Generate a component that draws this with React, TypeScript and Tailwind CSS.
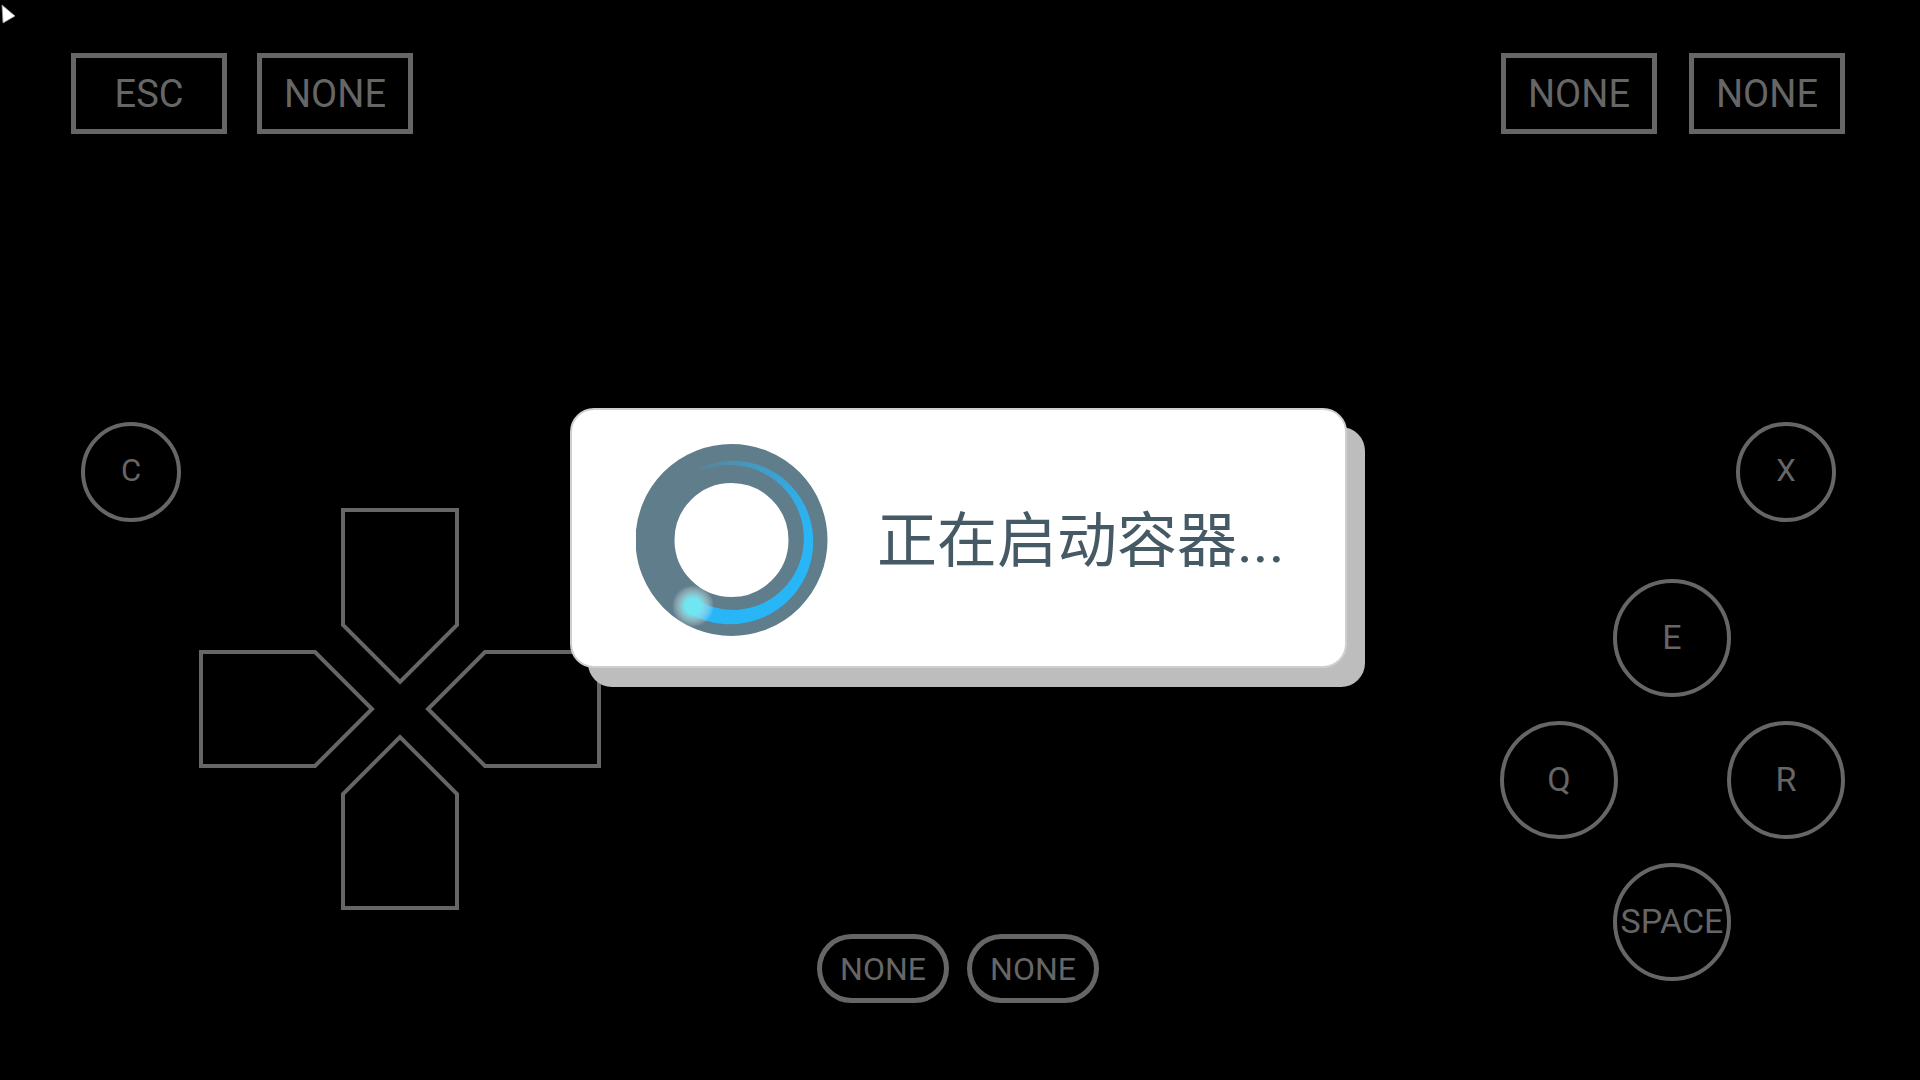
function Ring() {
  // Tapered blue sweep, from the faint tail at the top round to the bright head at the lower left.
  const cx = 95.5;
  const cy = 96;
  const r = 77;
  const start = -24;
  const end = 210;
  const n = 120;
  const segs = Array.from({ length: n }, (_, i) => {
    const t = i / n;
    const a0 = ((start + (end - start) * t - 0.3) * Math.PI) / 180;
    const a1 = ((start + (end - start) * (t + 1 / n) + 0.3) * Math.PI) / 180;
    // angle measured clockwise from the top
    const x0 = cx + r * Math.sin(a0);
    const y0 = cy - r * Math.cos(a0);
    const x1 = cx + r * Math.sin(a1);
    const y1 = cy - r * Math.cos(a1);
    const width = 3 + 13 * t;
    const op = Math.min(1, 0.1 + t * 2);
    return { d: `M${x0} ${y0}A${r} ${r} 0 0 1 ${x1} ${y1}`, width, op, key: i };
  });
  return (
    <svg width="192" height="192" viewBox="0 0 192 192" className="mt-[4px] shrink-0">
      <defs>
        <radialGradient id="glow">
          <stop offset="0" stopColor="#6fe6f0" />
          <stop offset="0.38" stopColor="#6fe6f0" />
          <stop offset="0.65" stopColor="#a6dfe6" stopOpacity="0.6" />
          <stop offset="1" stopColor="#e8f2f4" stopOpacity="0" />
        </radialGradient>
      </defs>
      <circle cx="95.5" cy="96" r="76.5" fill="none" stroke="#607d8b" strokeWidth="39" />
      {segs.map((s) => (
        <path key={s.key} d={s.d} fill="none" stroke="#29b6f6" strokeWidth={s.width} strokeOpacity={s.op} />
      ))}
      <circle cx="57" cy="162" r="21" fill="url(#glow)" />
    </svg>
  );
}

function DPad() {
  const pts = [
    "144,2 258,2 258,117 201,174 144,117",
    "144,400 258,400 258,286 201,229 144,286",
    "2,144 116,144 173,201 116,258 2,258",
    "400,144 286,144 229,201 286,258 400,258",
  ];
  return (
    <svg className="mt-[86px] ml-[18px] shrink-0" width="402" height="402" viewBox="0 0 402 402">
      {pts.map((p) => (
        <polygon key={p} points={p} fill="none" stroke="#666666" strokeWidth="4" />
      ))}
    </svg>
  );
}

function KeyRect({ label }: { label: string }) {
  return (
    <div className="flex h-[81px] w-[156px] items-center justify-center border-[5px] border-[#666666] pt-[2px] text-[38px] text-[#666666]">
      {label}
    </div>
  );
}

function KeyPill({ label }: { label: string }) {
  return (
    <div className="flex h-[69px] w-[132px] items-center justify-center rounded-full border-[5px] border-[#666666] text-[32px] text-[#666666]">
      {label}
    </div>
  );
}

function KeySmall({ label }: { label: string }) {
  return (
    <div className="flex size-[100px] shrink-0 items-center justify-center rounded-full border-4 border-[#666666] pb-[2px] text-[31px] text-[#666666]">
      {label}
    </div>
  );
}

function KeyBig({ label }: { label: string }) {
  return (
    <div className="flex size-[118px] shrink-0 items-center justify-center rounded-full border-4 border-[#666666] pb-px text-[34px] text-[#666666]">
      {label}
    </div>
  );
}

export default function App() {
  return (
    <div className="relative h-[1080px] w-[1920px] overflow-hidden bg-black pl-[71px] pr-[75px] pt-[53px] font-['Roboto','Liberation_Sans',sans-serif]">
      <svg className="absolute left-0 top-0" width="18" height="26" viewBox="0 0 18 26">
        <polygon points="2,5 15,16 3,23" fill="#ffffff" stroke="#9a9a9a" strokeWidth="0.8" />
      </svg>

      <div className="flex justify-between">
        <div className="flex gap-[30px]">
          <KeyRect label="ESC" />
          <KeyRect label="NONE" />
        </div>
        <div className="flex gap-[32px]">
          <KeyRect label="NONE" />
          <KeyRect label="NONE" />
        </div>
      </div>

      <div className="mt-[288px] flex items-start">
        <div className="ml-[10px] flex items-start">
          <KeySmall label="C" />
          <DPad />
        </div>

        <div className="ml-[216px] mt-[512px] flex gap-[18px]">
          <KeyPill label="NONE" />
          <KeyPill label="NONE" />
        </div>

        <div className="ml-auto flex w-[345px] flex-col">
          <div className="flex justify-end pr-[9px]">
            <KeySmall label="X" />
          </div>
          <div className="ml-[113px] mt-[57px]">
            <KeyBig label="E" />
          </div>
          <div className="mt-[24px] flex justify-between">
            <KeyBig label="Q" />
            <KeyBig label="R" />
          </div>
          <div className="ml-[113px] mt-[24px]">
            <KeyBig label="SPACE" />
          </div>
        </div>
      </div>

      <div className="absolute left-[570px] top-[408px] flex h-[260px] w-[777px] items-center gap-[49px] rounded-[24px] border-2 border-[#cfcfcf] bg-white pl-[64px] shadow-[18px_19px_0_0_#bdbdbd]">
        <Ring />
        <span className="mt-[7px] font-['Roboto','Noto_Sans_CJK_SC',sans-serif] text-[60px] leading-none text-[#455a64]">
          正在启动容器...
        </span>
      </div>
    </div>
  );
}
